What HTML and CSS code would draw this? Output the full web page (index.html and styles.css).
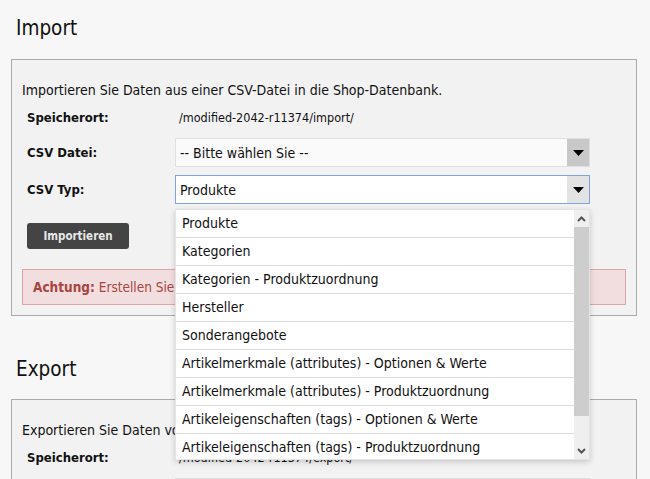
FILE: index.html
```html
<!DOCTYPE html>
<html lang="de">
<head>
<meta charset="utf-8">
<title>Import / Export</title>
<link rel="stylesheet" href="styles.css">
</head>
<body>
<h1 class="section-title title-import">Import</h1>
<div class="panel">
  <p class="desc">Importieren Sie Daten aus einer CSV-Datei in die Shop-Datenbank.</p>
  <div class="row row-text">
    <span class="label">Speicherort:</span>
    <span class="value">/modified-2042-r11374/import/</span>
  </div>
  <div class="row row-select">
    <span class="label">CSV Datei:</span>
    <div class="select">
      <span class="select-text">-- Bitte wählen Sie --</span>
      <span class="select-arrow"><svg width="11" height="6" viewBox="0 0 11 6"><path d="M0 0H11L5.5 6Z" fill="#000"/></svg></span>
    </div>
  </div>
  <div class="row row-select row-gap">
    <span class="label">CSV Typ:</span>
    <div class="select select-open">
      <span class="select-text">Produkte</span>
      <span class="select-arrow"><svg width="11" height="6" viewBox="0 0 11 6"><path d="M0 0H11L5.5 6Z" fill="#000"/></svg></span>
      <div class="dropdown">
        <ul class="options">
          <li>Produkte</li>
          <li>Kategorien</li>
          <li>Kategorien - Produktzuordnung</li>
          <li>Hersteller</li>
          <li>Sonderangebote</li>
          <li>Artikelmerkmale (attributes) - Optionen &amp; Werte</li>
          <li>Artikelmerkmale (attributes) - Produktzuordnung</li>
          <li>Artikeleigenschaften (tags) - Optionen &amp; Werte</li>
          <li>Artikeleigenschaften (tags) - Produktzuordnung</li>
        </ul>
        <div class="scrollbar">
          <span class="sb-btn"><svg width="9" height="6" viewBox="0 0 9 6"><path d="M1 5L4.5 1.5L8 5" fill="none" stroke="#555" stroke-width="2"/></svg></span>
          <span class="sb-track"><span class="sb-thumb"></span></span>
          <span class="sb-btn"><svg width="9" height="6" viewBox="0 0 9 6"><path d="M1 1L4.5 4.5L8 1" fill="none" stroke="#555" stroke-width="2"/></svg></span>
        </div>
      </div>
    </div>
  </div>
  <button class="btn">Importieren</button>
  <div class="alert"><b>Achtung:</b> Erstellen Sie vor dem Import unbedingt eine Sicherung der Datenbank!</div>
</div>

<h1 class="section-title title-export">Export</h1>
<div class="panel">
  <p class="desc">Exportieren Sie Daten von der Shop-Datenbank in eine CSV-Datei.</p>
  <div class="row row-text">
    <span class="label">Speicherort:</span>
    <span class="value">/modified-2042-r11374/export/</span>
  </div>
  <div class="row row-select">
    <span class="label">CSV Typ:</span>
    <div class="select">
      <span class="select-text">Produkte</span>
      <span class="select-arrow"><svg width="11" height="6" viewBox="0 0 11 6"><path d="M0 0H11L5.5 6Z" fill="#000"/></svg></span>
    </div>
  </div>
</div>
</body>
</html>
```
FILE: styles.css
```css
* { box-sizing: border-box; }
html, body { margin: 0; padding: 0; }
body {
  background: #f7f7f7;
  font-family: "DejaVu Sans Condensed", "DejaVu Sans", sans-serif;
  font-stretch: condensed;
  font-size: 14px;
  color: #111;
  overflow: hidden;
}
.section-title {
  margin: 0;
  padding-left: 16px;
  font-size: 20.5px;
  font-weight: normal;
  line-height: 22px;
  color: #111;
}
.title-import { padding-top: 17px; margin-bottom: 20px; }
.title-export { margin-top: 42px; margin-bottom: 19px; }
.panel {
  margin: 0 13px 0 11px;
  border: 1px solid #aaa;
  background: #f2f2f2;
  padding: 22px 10px 10px 10px;
}
.desc { margin: 0; line-height: 16px; }
.row { display: flex; align-items: center; }
.row-text { margin-top: 8px; height: 23px; }
.row-select { margin-top: 9px; height: 29px; }
.row-gap { margin-top: 8px; }
.label {
  width: 153px;
  padding-left: 5px;
  font-size: 13px;
  font-weight: bold;
  flex: none;
}
.value { font-size: 12.5px; padding-left: 4px; }
.select {
  position: relative;
  width: 415px;
  height: 29px;
  display: flex;
  align-items: center;
  background: #fafafa;
  border: 1px solid #e0e0e0;
}
.select-text { flex: 1; padding-left: 4px; }
.select-arrow {
  width: 22px;
  height: 100%;
  background: #c8c8c8;
  display: flex;
  align-items: center;
  justify-content: center;
}
.select-open { border-color: #7fa3dc; background: #fff; }
.select-open .select-arrow { background: #e3e3e3; }
.dropdown {
  position: absolute;
  left: -1px;
  top: 33px;
  width: 415px;
  height: 251px;
  display: flex;
  background: #fff;
  border: 1px solid #e4e4e4;
  box-shadow: 0 2px 6px rgba(0,0,0,0.18);
  z-index: 5;
}
.options {
  list-style: none;
  margin: 0;
  padding: 0;
  flex: 1;
  overflow: hidden;
}
.options li {
  height: 28px;
  line-height: 27px;
  padding-left: 6px;
  border-bottom: 1px solid #dcdcdc;
  white-space: nowrap;
}
.scrollbar {
  width: 15px;
  display: flex;
  flex-direction: column;
  background: #efefef;
}
.sb-btn {
  height: 17px;
  display: flex;
  align-items: center;
  justify-content: center;
}
.sb-track { flex: 1; display: flex; flex-direction: column; }
.sb-thumb { height: 189px; background: #cdcdcd; }
.btn {
  display: block;
  margin: 19px 0 0 5px;
  width: 102px;
  height: 26px;
  background: #444;
  border: none;
  border-radius: 3px;
  color: #e8e8e8;
  font-family: inherit;
  font-stretch: condensed;
  font-size: 11.5px;
  font-weight: bold;
  padding: 0;
}
.alert {
  margin-top: 20px;
  height: 36px;
  line-height: 34px;
  padding-left: 10px;
  font-size: 13.5px;
  background: #f2dede;
  border: 1px solid #dca7a7;
  color: #a94442;
  white-space: nowrap;
  overflow: hidden;
}
```
